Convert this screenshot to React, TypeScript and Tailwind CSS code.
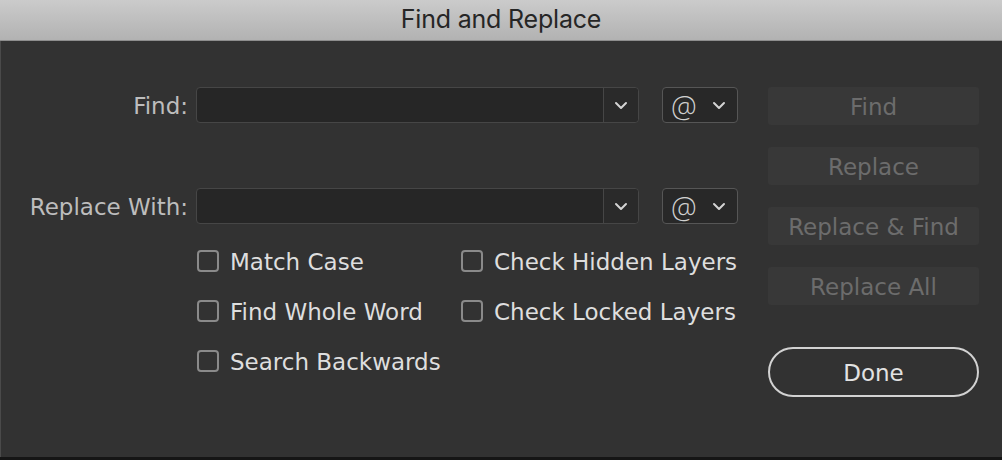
import React from "react";

const Chevron = () => (
  <svg width="14" height="9" viewBox="0 0 14 9" fill="none">
    <polyline points="2,2 7,7 12,2" stroke="#d4d4d4" strokeWidth="2" strokeLinecap="round" strokeLinejoin="round" />
  </svg>
);

const FieldRow = ({ label }: { label: string }) => (
  <div className="flex items-center h-9">
    <div className="w-[187px] pt-[3px] text-right text-[#bdbdbd]">{label}</div>
    <div className="ml-2 flex h-9 w-[443px] rounded-[4px] border border-[#464646] bg-[#262626]">
      <div className="flex-1" />
      <div className="flex w-[35px] items-center justify-center border-l border-[#464646] bg-[#2a2a2a] rounded-r-[4px]">
        <Chevron />
      </div>
    </div>
    <div className="ml-[23px] flex h-9 w-[76px] items-center justify-between rounded-[4px] border border-[#565656] bg-[#282828] pl-[8px] pr-[11px]">
      <span className="font-['Open_Sans',sans-serif] text-[29px] font-extralight leading-none text-[#d0d0d0]">@</span>
      <Chevron />
    </div>
  </div>
);

const Check = ({ label }: { label: string }) => (
  <div className="flex h-[50px] items-center">
    <div className="h-[22px] w-[22px] rounded-[4px] border-2 border-[#8a8a8a]" />
    <span className="ml-[11px] pt-[2px] text-[#dedede]">{label}</span>
  </div>
);

const ActionButton = ({ label }: { label: string }) => (
  <div className="flex h-[38px] w-[211px] items-center justify-center rounded-[3px] bg-[#383838] pt-[2px] text-[#6c6c6c]">
    {label}
  </div>
);

export default function App() {
  return (
    <div className="h-[460px] w-[1002px] overflow-hidden bg-[#323232] font-['DejaVu_Sans',sans-serif] text-[23px]">
      <div className="flex h-[41px] items-center justify-center border-b border-[#8e8e8e] bg-gradient-to-b from-[#cbcbcb] to-[#b2b2b2]">
        <span className="font-['Inter',sans-serif] text-[25px] tracking-[-0.2px] text-[#262626]">Find and Replace</span>
      </div>
      <div className="flex h-[416px] border-l border-[#4a4a4a]">
        <div className="w-[767px] pt-[46px]">
          <FieldRow label="Find:" />
          <div className="mt-[65px]">
            <FieldRow label="Replace With:" />
          </div>
          <div className="mt-3 ml-[196px] grid grid-cols-[264px_auto]">
            <Check label="Match Case" />
            <Check label="Check Hidden Layers" />
            <Check label="Find Whole Word" />
            <Check label="Check Locked Layers" />
            <Check label="Search Backwards" />
          </div>
        </div>
        <div className="flex flex-col pt-[46px]">
          <div className="flex flex-col gap-[22px]">
            <ActionButton label="Find" />
            <ActionButton label="Replace" />
            <ActionButton label="Replace & Find" />
            <ActionButton label="Replace All" />
          </div>
          <div className="mt-[42px] flex h-[50px] w-[211px] items-center justify-center rounded-full border-2 border-[#d2d2d2] pt-[2px] text-[#e2e2e2]">
            Done
          </div>
        </div>
      </div>
      <div className="h-[3px] bg-[#151515]" />
    </div>
  );
}
